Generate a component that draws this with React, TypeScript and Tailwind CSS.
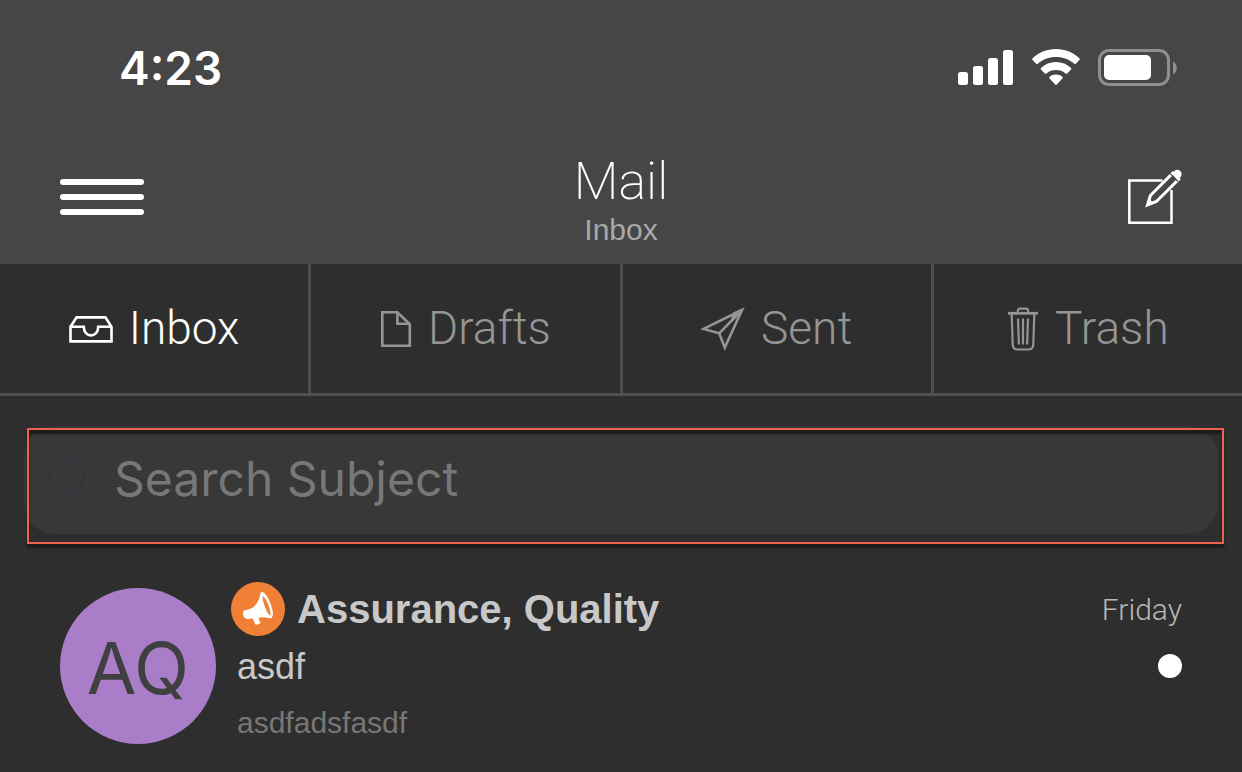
import { ReactNode } from "react"

interface Tab {
  label: string
  icon: ReactNode
  active?: boolean
}

const InboxIcon = () => (
  <svg className="w-11 h-7" viewBox="0 0 44 28" fill="none" stroke="currentColor" strokeWidth="2.6">
    <path d="M1.5 11.8 7.6 2.4h28.8l6.1 9.4V26.4h-41V11.8h13.3c0 5 3 8.6 7.2 8.6s7.2-3.6 7.2-8.6h13.3" />
  </svg>
)

const DraftIcon = () => (
  <svg className="w-8 h-9" viewBox="0 0 32 36" fill="none" stroke="currentColor" strokeWidth="2.6">
    <path d="M2.300 1.300h15.100l12.400 12v21.400H2.300z" />
    <path d="M17.400 1.300v11.500h12.400" />
  </svg>
)

const SentIcon = () => (
  <svg className="w-11 h-11" viewBox="0 0 44 44" fill="none" stroke="currentColor" strokeWidth="2.6">
    <path d="M41 3 2.5 21.9 18.2 26.3 23.8 40.6z" />
    <path d="M41 3 18.2 26.3" />
    <path d="M41 3 31 13.2l2.8-7z" fill="currentColor" />
  </svg>
)

const TrashIcon = () => (
  <svg className="w-8 h-11" viewBox="0 0 32 44" fill="none" stroke="currentColor" strokeWidth="2.2">
    <path d="M1 6.300h30" strokeWidth="2.8" />
    <path d="M10.800 6V4Q10.800 1.600 13.200 1.600h5.600Q21.200 1.600 21.200 4v2" />
    <path d="M4.700 7 5.700 37.500Q6 42.500 10.500 42.500H21.500Q26 42.500 26.300 37.500L27.300 7" />
    <path d="M11 11.500 11.900 37.500M16 11.500v26M21 11.500 20.100 37.500" />
  </svg>
)

const tabs: Tab[] = [
  { label: "Inbox", icon: <InboxIcon />, active: true },
  { label: "Drafts", icon: <DraftIcon /> },
  { label: "Sent", icon: <SentIcon /> },
  { label: "Trash", icon: <TrashIcon /> },
]

const StatusBar = () => (
  <div className="flex items-center justify-between pl-[119px] pr-16 pt-9">
    <span className="text-[46px] leading-16 font-semibold">4:23</span>
    <div className="flex items-center gap-[17px] pb-0.5">
      <svg className="w-14 h-9" viewBox="0 0 56 36" fill="currentColor">
        <rect x="0" y="23" width="10" height="13" rx="2.500" />
        <rect x="15" y="17" width="10" height="19" rx="2.500" />
        <rect x="30" y="9" width="10" height="27" rx="2.500" />
        <rect x="45" y="1" width="10" height="35" rx="2.500" />
      </svg>
      <svg className="w-[50px] h-9" viewBox="0 0 50 36" fill="currentColor">
        <path d="M25 0C34.500 0 42.500 3.600 48.400 9.200q.9.900 0 1.800l-3.500 3.800q-.8.800-1.600 0C38.500 10.500 32 8 25 8S11.500 10.500 6.700 14.800q-.8.800-1.600 0L1.600 11q-.9-.9 0-1.800C7.500 3.600 15.500 0 25 0z" />
        <path d="M25 13c5.800 0 11 2.200 15 5.900q.8.800 0 1.600l-3.800 3.900q-.8.800-1.600 0C32 22.200 28.700 21 25 21s-7 1.200-9.600 3.400q-.8.800-1.600 0L10 20.500q-.8-.8 0-1.600C14 15.200 19.200 13 25 13z" />
        <path d="M25 25.500c2.500 0 4.700.9 6.400 2.300q.8.800 0 1.600l-5.600 6.100q-.8.700-1.600 0l-5.600-6.100q-.8-.8 0-1.600C20.300 26.400 22.500 25.500 25 25.500z" />
      </svg>
      <svg className="w-20 h-[37px]" viewBox="0 0 80 37" fill="none">
        <rect x="1.500" y="1.500" width="69" height="34" rx="9.500" stroke="#909090" strokeWidth="3" />
        <rect x="6" y="6" width="47" height="25" rx="5" fill="white" />
        <path d="M75 12.500c5 2.500 5 10.500 0 13z" fill="#909090" />
      </svg>
    </div>
  </div>
)

const MegaphoneIcon = () => (
  <svg className="w-[54px] h-[54px] shrink-0" viewBox="0 0 54 54">
    <circle cx="27" cy="27" r="27" fill="#f08035" />
    <path
      fill="white"
      fillRule="evenodd"
      d="M30.200 10.200c1.500-1 3.500.6 5.200 3.300 3.500 5.400 6.100 12.500 6.500 17.500.2 3-.9 5.400-3 5.200-3.600-.6-7.200-1.200-10.200-.7-.8.300-1.200.8-1 1.700l1.600 3c.3.800-.1 1.300-.9 1.600l-3 .9c-.7.100-1.100-.2-1.300-.8l-2-4.700c-.4-.9-1-1-1.900-.8-2 .8-4.600 1-6.300-.3-1.500-1.200-2.300-4.300-1.600-6.300.5-1.400 2-1.900 3.600-2.100 6.800-1.300 10.800-5.800 13-13.300.4-1.700.2-3.500 1.300-4.200zM31.800 14c-.9 4 3.700 17.500 7.500 19.800 1.500-3.800-3.500-17.300-7.500-19.800z"
    />
  </svg>
)

export default function App() {
  return (
    <div className="min-h-screen bg-[#2e2e2e] text-white font-['Inter','Liberation_Sans',sans-serif]">
      <header className="bg-[#464646] pb-3.5">
        <StatusBar />
        <div className="grid grid-cols-3 items-start pt-[54px] px-[60px]">
          <button type="button" aria-label="Menu" className="mt-[25px] flex w-21 flex-col gap-[9px]">
            <span className="h-1.5 w-full rounded-full bg-white" />
            <span className="h-1.5 w-full rounded-full bg-white" />
            <span className="h-1.5 w-full rounded-full bg-white" />
          </button>
          <div className="text-center">
            <h1 className="text-[52px] leading-14 font-extralight font-['Roboto','Inter',sans-serif]">Mail</h1>
            <p className="text-3xl leading-10 text-[#a8a8a8] font-['Liberation_Sans',sans-serif]">Inbox</p>
          </div>
          <button type="button" aria-label="Compose" className="mt-3.5 justify-self-end">
            <svg className="w-14 h-14" viewBox="0 0 56 56" fill="none" stroke="white" strokeWidth="2.500">
              <path d="M36.500 12.500H3.300v42.200h42.200V22" />
              <path d="M21.500 37 24.400 27.500 46.700 5.200l6 6L30.400 33.500z" strokeWidth="3" />
              <path d="M21 37.500 23.500 31l4 4z" fill="white" stroke="none" />
              <path d="M44.200 5.700 52.200 13.700" stroke="#464646" strokeWidth="1.200" />
              <path d="M47 4.200q4-4.200 7.200-1.200t-.6 7.600z" fill="white" stroke="none" />
            </svg>
          </button>
        </div>
      </header>

      <nav className="flex border-b-3 border-[#505050]">
        {tabs.map((tab) => (
          <button
            key={tab.label}
            type="button"
            className={`flex flex-1 items-center justify-center gap-4 border-r-3 border-[#505050] last:border-r-0 h-[129px] text-[46px] font-light font-['Roboto','Inter',sans-serif] ${tab.active ? "text-white" : "text-[#959595]"}`}
          >
            {tab.icon}
            {tab.label}
          </button>
        ))}
      </nav>

      <main>
        <div className="relative mx-6 mt-[30px]">
          <label className="flex h-[108px] items-center gap-[18px] rounded-[30px] bg-[#383838] pl-6 pb-1">
            <svg className="w-12 h-12 shrink-0" viewBox="0 0 48 48" fill="none" stroke="#35353c" strokeWidth="4" strokeLinecap="round">
              <circle cx="19" cy="20" r="17" />
              <path d="M31 32l13 13" strokeWidth="5" />
            </svg>
            <input
              type="text"
              aria-label="Search Subject"
              placeholder="Search Subject"
              className="min-w-0 flex-1 bg-transparent text-5xl outline-none placeholder:text-[#777777]"
            />
          </label>
          <div className="pointer-events-none absolute top-0.5 left-[3px] -right-1.5 h-29 border-2 border-[#ec6350] shadow-[0_4px_2px_#1c1c1c,inset_0_4px_2px_#1c1c1c]" />
        </div>

        <article className="flex gap-[15px] px-[60px] pt-12 font-['Liberation_Sans',sans-serif]">
          <div className="mt-1.5 flex size-39 shrink-0 items-center justify-center rounded-full bg-[#a97dc8] pt-1 text-7xl text-[#404040] font-['Inter',sans-serif]">
            AQ
          </div>
          <div className="min-w-0 flex-1">
            <div className="flex items-center gap-3">
              <MegaphoneIcon />
              <h2 className="text-[40px] leading-[54px] font-bold text-[#c8c8c8]">Assurance, Quality</h2>
            </div>
            <p className="pl-1.5 text-4xl leading-[62px] text-[#c8c8c8]">asdf</p>
            <p className="pl-1.5 text-3xl leading-[50px] text-[#777777]">asdfadsfasdf</p>
          </div>
          <div className="flex flex-col items-end gap-4">
            <time className="text-3xl leading-14 font-light text-[#b8b8b8] font-['Roboto','Inter',sans-serif]">Friday</time>
            <span className="size-6 rounded-full bg-white" />
          </div>
        </article>
      </main>
    </div>
  )
}
